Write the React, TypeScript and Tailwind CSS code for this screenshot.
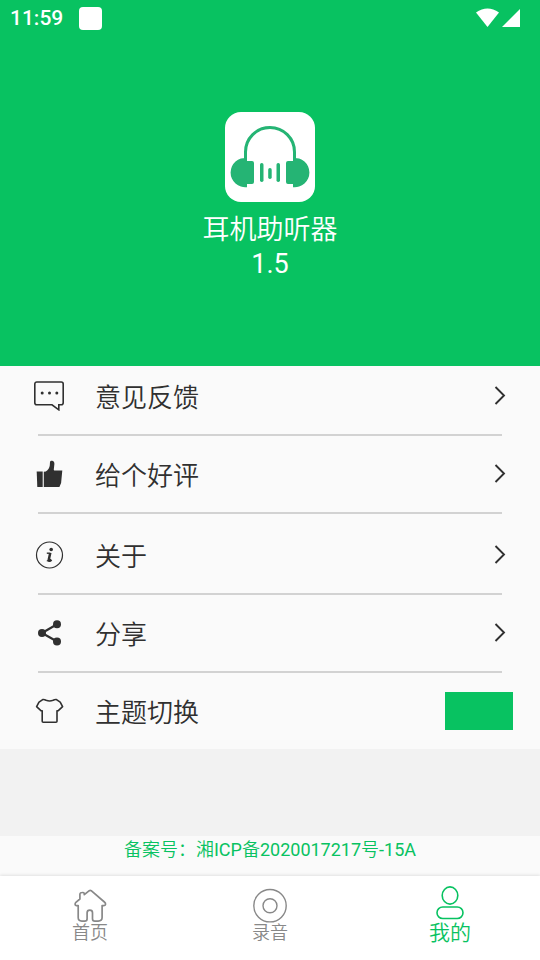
import React, { useState } from 'react';

const FeedbackIcon = () => (
  <svg width="30" height="30" viewBox="0 0 30 30" fill="none" stroke="currentColor" strokeWidth="1.6">
    <path d="M2.800 1h24.400a2 2 0 0 1 2 2v18.800a2 2 0 0 1-2 2h-2.400v5l-6.800-5H2.800a2 2 0 0 1-2-2V3a2 2 0 0 1 2-2z" />
    <g fill="currentColor" stroke="none">
      <circle cx="8.200" cy="12" r="1.500" />
      <circle cx="15.500" cy="12" r="1.500" />
      <circle cx="22.800" cy="12" r="1.500" />
    </g>
  </svg>
);

const LikeIcon = () => (
  <svg width="30" height="30" viewBox="0 0 30 30" fill="currentColor">
    <path d="M2.700 12.500h6V28H3.300z" />
    <path d="M9.800 12.800l2-.4c2.400-1.600 3.800-3.600 4-6.200l.2-3.200c.2-1 1-1.400 2-1.300 1.600.2 2.500 1.500 2.400 3.400l-.6 5.400c0 .7.3 1 1 1h7.500l-1.200 12.600-1.700 3.900H9.800z" />
  </svg>
);

const AboutIcon = () => (
  <svg width="30" height="30" viewBox="0 0 30 30" fill="none" stroke="currentColor">
    <circle cx="15.500" cy="15" r="13" strokeWidth="1.200" />
    <circle cx="17.200" cy="9.500" r="1.800" fill="currentColor" stroke="none" />
    <path d="M12.800 13.200h2.500" strokeWidth="1.400" />
    <path d="M16.300 12.700l-1.500 6.800c-.3 1.500.9 1.500 2.700.2" strokeWidth="2.500" />
    <path d="M12.800 20.800h3.500" strokeWidth="1.200" />
  </svg>
);

const ShareIcon = () => (
  <svg width="30" height="30" viewBox="0 0 30 30" fill="currentColor">
    <path d="M23 6.300L8 15l15 8.500" fill="none" stroke="currentColor" strokeWidth="2.200" />
    <circle cx="23" cy="6.300" r="4" />
    <circle cx="8" cy="15" r="4" />
    <circle cx="23" cy="23.500" r="4" />
  </svg>
);

const ThemeIcon = () => (
  <svg width="30" height="30" viewBox="0 0 30 30" fill="none" stroke="currentColor" strokeWidth="1.600" strokeLinejoin="round">
    <path d="M8.700 3.600c1.300-.2 2.300.1 3.400.7 2.200.8 4.800.8 7 0 1.100-.6 2.100-.9 3.400-.7l3.700 2.500 2.400 4.600-4.300 4h-1.300v10.500a1 1 0 0 1-1 1H9.200a1 1 0 0 1-1-1V14.700H6.900l-4.300-4L5 6.100z" />
  </svg>
);

const ChevronIcon = () => (
  <svg width="12" height="20" viewBox="0 0 12 20" fill="none" stroke="currentColor" strokeWidth="1.9">
    <path d="M1.500 1L10 9.500 1.500 18" />
  </svg>
);

const HomeIcon = () => (
  <svg width="36" height="36" viewBox="0 0 36 36" fill="none" stroke="currentColor" strokeWidth="1.700" strokeLinejoin="round">
    <path d="M19.200 2.700c-.7-.5-1.200-.5-1.900 0l-5 4c0-1.200.1-2.200-1.500-2.200-2.100 0-2.900.4-2.900 2V11l-4 3.300c-1 1.100-1.300 3.300.3 3.300h2v12c0 2.500 1.100 3.500 3.600 3.500h2.900c1.600 0 2.400-.8 2.400-2.400v-6c0-1.700.8-2.500 2.700-2.500s2.700.8 2.700 2.500v6c0 1.600.8 2.400 2.400 2.400h3.200c2.500 0 4-1 4-3.500v-12h1.500c2.300 0 2.600-2.100.8-3.600z" />
  </svg>
);

const RecordIcon = () => (
  <svg width="36" height="36" viewBox="0 0 36 36" fill="none" stroke="currentColor" strokeWidth="1.400">
    <circle cx="18" cy="17.700" r="16.200" />
    <circle cx="18" cy="17.700" r="7" />
  </svg>
);

const MineIcon = () => (
  <svg width="36" height="36" viewBox="0 0 36 36" fill="none" stroke="currentColor" strokeWidth="1.600">
    <ellipse cx="18" cy="10.500" rx="7.800" ry="8.600" />
    <rect x="5" y="22" width="26" height="11.500" rx="5.750" />
  </svg>
);

const AppLogo = () => (
  <svg width="90" height="90" viewBox="0 0 90 90" fill="#25b474">
    <path d="M20.500 49V40a24.500 24.500 0 0 1 49 0v9" fill="none" stroke="#25b474" strokeWidth="3" />
    <path d="M22 46v3h5a2 2 0 0 1 2 2v19a2 2 0 0 1-2 2h-5v3.200A14.700 14.700 0 1 1 22 46z" />
    <path d="M68 46v3h-5a2 2 0 0 0-2 2v19a2 2 0 0 0 2 2h5v3.200A14.700 14.700 0 1 0 68 46z" />
    <rect x="35" y="51" width="3.500" height="19" rx="1.700" />
    <rect x="43.200" y="56" width="3.500" height="11" rx="1.700" />
    <rect x="51.500" y="51" width="3.500" height="19" rx="1.700" />
  </svg>
);

const rows = [
  { label: '意见反馈', icon: FeedbackIcon, pad: '' },
  { label: '给个好评', icon: LikeIcon, pad: 'pt-2' },
  { label: '关于', icon: AboutIcon, pad: 'pt-[11px]' },
  { label: '分享', icon: ShareIcon, pad: 'pt-2' },
];

const tabs = [
  { id: 'home', label: '首页', icon: HomeIcon },
  { id: 'record', label: '录音', icon: RecordIcon },
  { id: 'mine', label: '我的', icon: MineIcon },
];

export default function App() {
  const [tab, setTab] = useState('mine');

  return (
    <div className="flex flex-col min-h-screen bg-[#f2f2f2] text-[#303030] font-['Roboto','Noto_Sans_CJK_SC',sans-serif]">
      <header className="bg-[#08c261] text-white pb-[86px]">
        <div className="flex items-center justify-between h-9 pl-[10px] pr-[19px]">
          <div className="flex items-center gap-4">
            <span className="text-[21px] leading-9 font-medium">11:59</span>
            <span className="w-[23px] h-[23px] rounded bg-white" />
          </div>
          <svg width="45" height="20" viewBox="0 0 45 20" fill="currentColor">
            <path d="M0 4.500Q11.500-3.500 23 4.500L11.500 19z" />
            <path d="M44 1v18H26z" />
          </svg>
        </div>
        <div className="flex flex-col items-center pt-[76px]">
          <div className="rounded-2xl bg-white overflow-hidden">
            <AppLogo />
          </div>
          <h1 className="mt-[10px] text-[27px] leading-9 font-[350]">耳机助听器</h1>
          <p className="text-[27px] leading-8">1.5</p>
        </div>
      </header>

      <main className="bg-[#fafafa]">
        {rows.map(({ label, icon: Icon, pad }) => (
          <div key={label} className={pad}>
            <button type="button" className="flex items-center w-full h-[60px] px-[34px] text-left">
              <Icon />
              <span className="flex-1 ml-[31px] pt-[3px] text-[26px] leading-9 font-[350]">{label}</span>
              <ChevronIcon />
            </button>
            <div className="mx-[38px] mt-2 h-[2px] bg-[#d2d2d2]" />
          </div>
        ))}
        <div className="py-2">
          <div className="flex items-center h-[60px] pl-[34px] pr-[27px]">
            <ThemeIcon />
            <span className="flex-1 ml-[31px] pt-[3px] text-[26px] leading-9 font-[350]">主题切换</span>
            <button type="button" aria-label="主题切换" className="w-[68px] h-[38px] bg-[#08c261]" />
          </div>
        </div>
      </main>

      <footer className="mt-auto">
        <p className="h-10 bg-[#fafafa] text-center text-[18px] leading-7 text-[#08c261] font-[350]">
          备案号：湘<span className="font-normal">ICP</span>备<span className="font-normal">2020017217</span>号
          <span className="font-normal">-15A</span>
        </p>
        <nav className="relative grid grid-cols-3 h-[84px] bg-white shadow-[0_-1px_3px_rgba(0,0,0,0.1)]">
          {tabs.map(({ id, label, icon: Icon }) => (
            <button
              key={id}
              type="button"
              onClick={() => setTab(id)}
              className={`flex flex-col items-center font-[350] ${
                tab === id
                  ? 'pt-[9px] text-[21px] leading-6 text-[#08c261]'
                  : 'pt-3 text-[18px] leading-[18px] text-[#888888]'
              }`}
            >
              <Icon />
              <span>{label}</span>
            </button>
          ))}
        </nav>
      </footer>
    </div>
  );
}
